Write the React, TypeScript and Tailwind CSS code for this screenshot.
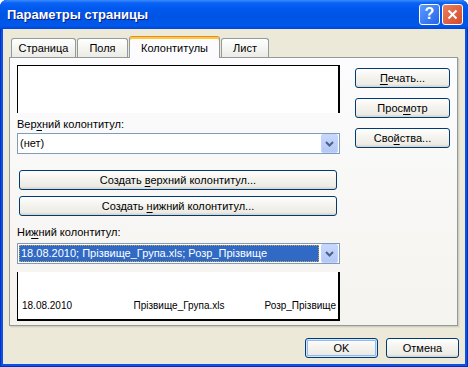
import React from 'react';

const XpButton = ({
  children,
  className = '',
  isDefault = false,
}: {
  children: React.ReactNode;
  className?: string;
  isDefault?: boolean;
}) => (
  <div
    className={`flex items-center justify-center h-[20px] rounded-[3px] border border-[#003C74] bg-[linear-gradient(to_bottom,#FFFFFF_0%,#F5F4EF_40%,#ECEBE6_85%,#D6D0C5_100%)] text-[11px] leading-[13px] text-black ${
      isDefault ? 'shadow-[inset_0_0_0_1px_#CEE7FF,inset_0_0_0_2px_#98B8EA]' : ''
    } ${className}`}
  >
    <span className="whitespace-nowrap">{children}</span>
  </div>
);

const DropArrow = () => (
  <div className="w-[17px] h-[19px] mr-px rounded-[2px] border border-[#C3D3FD] bg-[linear-gradient(to_bottom,#C8D8FC,#B4C8F6)] flex items-center justify-center">
    <svg width="9" height="6" viewBox="0 0 9 6">
      <path d="M1 1 L4.5 4.5 L8 1" fill="none" stroke="#4D6185" strokeWidth="2" />
    </svg>
  </div>
);

const Combo = ({ children }: { children: React.ReactNode }) => (
  <div className="h-[21px] border border-[#7F9DB9] bg-white flex items-center">
    <div className="flex-1 min-w-0 pl-px pr-[2px] h-full flex items-center">{children}</div>
    <DropArrow />
  </div>
);

const Mn = ({ children }: { children: React.ReactNode }) => (
  <span className="underline underline-offset-[2px] decoration-1">{children}</span>
);

const Tab = ({ label, className = '' }: { label: string; className?: string }) => (
  <div
    className={`h-[19px] rounded-t-[3px] border border-b-0 border-[#919B9C] bg-[linear-gradient(to_bottom,#FFFFFF,#F3F3EF_60%,#ECEBE6)] flex items-center justify-center text-[11px] text-black ${className}`}
  >
    {label}
  </div>
);

export default function App() {
  return (
    <div className="w-[468px] h-[367px] bg-white [font-family:'Liberation_Sans',Arial,sans-serif]">
      <div className="w-full h-full flex flex-col rounded-t-[7px] overflow-hidden bg-[#0A52E6] shadow-[inset_0_0_0_1px_#0030C0]">
        {/* title bar */}
        <div className="h-[29px] shrink-0 flex items-center pl-[7px] pr-[5px] bg-[linear-gradient(to_bottom,#3C8DFF_0%,#0B63F5_10%,#0058EE_30%,#0054E3_60%,#0058EC_88%,#0046D6_100%)]">
          <div className="flex-1 text-white font-bold text-[13px] leading-[16px] [text-shadow:1px_1px_0_#0A1F85]">
            Параметры страницы
          </div>
          <div className="w-[21px] h-[21px] rounded-[3px] border border-white bg-[linear-gradient(135deg,#5C9BFF,#2464E8)] flex items-center justify-center text-white font-bold text-[16px] leading-none mb-px">
            ?
          </div>
          <div className="w-[21px] h-[21px] ml-[2px] rounded-[3px] border border-white bg-[linear-gradient(135deg,#E9805E,#D34A2A)] flex items-center justify-center mb-px">
            <svg width="11" height="11" viewBox="0 0 11 11">
              <path d="M1.5 1.5 L9.5 9.5 M9.5 1.5 L1.5 9.5" stroke="white" strokeWidth="2" />
            </svg>
          </div>
        </div>

        {/* dialog body */}
        <div className="flex-1 mx-[3px] mb-[3px] bg-[#ECE9D8] flex flex-col pt-[7px] pl-[6px]">
          {/* tabs */}
          <div className="h-[21px] flex items-end pl-[2px]">
            <Tab label="Страница" className="w-[65px]" />
            <Tab label="Поля" className="w-[51px] ml-px" />
            <div className="relative z-10 h-[22px] -mb-px w-[91px] ml-px rounded-t-[3px] border border-b-0 border-[#919B9C] border-t-[#E68B2C] bg-[#FCFCFE] shadow-[inset_0_2px_0_#FFC73C] flex items-center justify-center text-[11px] text-black pt-px">
              Колонтитулы
            </div>
            <Tab label="Лист" className="w-[48px] ml-px" />
          </div>

          {/* tab panel */}
          <div className="w-[449px] h-[269px] border border-[#919B9C] bg-[linear-gradient(to_bottom,#FCFCFE,#F4F3EE)] shadow-[1px_1px_0_#D0CEBF,2px_2px_0_#E2DFCF] flex pt-[7px] pl-[7px] gap-[15px]">
            <div className="w-[323px] flex flex-col">
              <div className="h-[48px] bg-white border-t border-l border-black border-r-2" />

              <div className="mt-[4px] h-[14px] text-[11px] leading-[14px] text-black">
                Вер<Mn>х</Mn>ний колонтитул:
              </div>
              <div className="mt-[2px]">
                <Combo>
                  <span className="text-[11px] leading-[13px] text-black pl-px">(нет)</span>
                </Combo>
              </div>

              <XpButton className="mt-[16px] ml-[2px] w-[318px]">
                Создать <Mn>в</Mn>ерхний колонтитул...
              </XpButton>
              <XpButton className="mt-[6px] ml-[2px] w-[318px]">
                Создать <Mn>н</Mn>ижний колонтитул...
              </XpButton>

              <div className="mt-[9px] h-[14px] text-[11px] leading-[14px] text-black">
                Ни<Mn>ж</Mn>ний колонтитул:
              </div>
              <div className="mt-[4px]">
                <Combo>
                  <div className="w-full h-[17px] bg-[#316AC5] border border-dotted border-[#CEA34E] flex items-center pl-px">
                    <span className="text-[11px] leading-[13px] text-white whitespace-nowrap">
                      18.08.2010; Прізвище_Група.xls; Розр_Прізвище
                    </span>
                  </div>
                </Combo>
              </div>

              <div className="mt-[8px] h-[49px] bg-white border-l border-black border-r-2 border-b-2 grid grid-cols-3 items-end pb-[7px] px-[4px] pr-[2px] text-[10px] leading-[12px] text-black">
                <span className="whitespace-nowrap">18.08.2010</span>
                <span className="text-center whitespace-nowrap">Прізвище_Група.xls</span>
                <span className="text-right whitespace-nowrap">Розр_Прізвище</span>
              </div>
            </div>

            <div className="w-[95px] flex flex-col gap-[10px] pt-[3px]">
              <XpButton>
                <Mn>П</Mn>ечать...
              </XpButton>
              <XpButton>
                Прос<Mn>м</Mn>отр
              </XpButton>
              <XpButton>
                Сво<Mn>й</Mn>ства...
              </XpButton>
            </div>
          </div>

          {/* bottom buttons */}
          <div className="mt-[12px] flex justify-end gap-[8px] pr-[6px]">
            <XpButton isDefault className="w-[73px]">
              OK
            </XpButton>
            <XpButton className="w-[73px]">Отмена</XpButton>
          </div>
        </div>
      </div>
    </div>
  );
}
